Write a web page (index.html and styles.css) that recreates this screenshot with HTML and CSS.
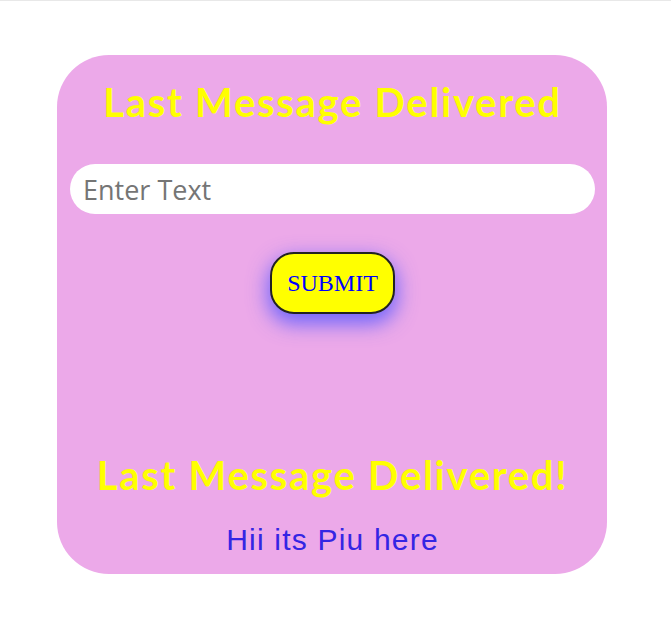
FILE: index.html
```html
<!DOCTYPE html>
<html>
<head>
<meta charset="utf-8">
<link rel="stylesheet" href="styles.css">
</head>
<body>
<div class="page">
  <div class="card">
    <h1 class="title">Last Message Delivered</h1>
    <input class="field" type="text" placeholder="Enter Text">
    <button class="submit">SUBMIT</button>
    <div class="spacer"></div>
    <h2 class="title title-bottom">Last Message Delivered!</h2>
    <p class="message">Hii its Piu here</p>
  </div>
</div>
</body>
</html>
```

FILE: styles.css
```css
html, body {
  margin: 0;
  padding: 0;
  background: #ffffff;
}
body {
  border-top: 1px solid #e8e8e8;
}
.page {
  padding: 54px 0 0 57px;
}
.card {
  width: 550px;
  height: 519px;
  box-sizing: border-box;
  background: #eca9e9;
  border-radius: 52px;
  display: flex;
  flex-direction: column;
  align-items: center;
  padding: 24px 12px 0 13px;
}
.title {
  margin: 0;
  font-family: "Lato", sans-serif;
  font-weight: 700;
  font-size: 40px;
  line-height: 46px;
  color: #ffff00;
  letter-spacing: 1.7px;
  white-space: nowrap;
}
.field {
  margin-top: 39px;
  width: 100%;
  height: 50px;
  box-sizing: border-box;
  border: none;
  outline: none;
  border-radius: 25px;
  background: #ffffff;
  padding: 0 13px;
  font-family: "Open Sans", sans-serif;
  font-size: 27px;
  color: #333;
}
.field::placeholder {
  color: #757575;
}
.submit {
  margin-top: 38px;
  width: 125px;
  height: 62px;
  box-sizing: border-box;
  background: #ffff00;
  border: 2px solid #222;
  border-radius: 24px;
  font-family: "Liberation Serif", serif;
  font-size: 24px;
  color: #0000ff;
  padding: 0;
  box-shadow: 0 8px 20px 2px rgba(90, 90, 255, 0.85);
}
.spacer {
  flex: 1;
}
.message {
  margin: 26px 0 18px;
  font-family: "Liberation Sans", Arial, sans-serif;
  font-size: 30px;
  line-height: 32px;
  letter-spacing: 1.2px;
  color: #3425e4;
}
```
